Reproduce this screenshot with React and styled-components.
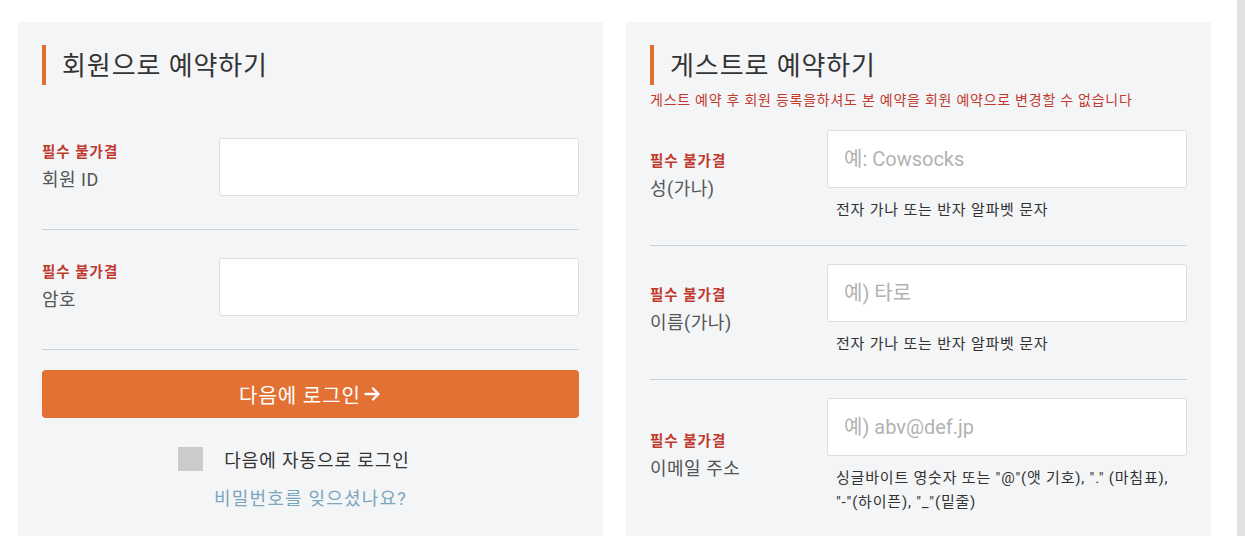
import React from "react";
import styled, { createGlobalStyle } from "styled-components";

const GlobalStyle = createGlobalStyle`
  html, body {
    margin: 0;
    padding: 0;
    background: #ffffff;
  }
  body {
    font-family: Roboto, "Noto Sans CJK KR", "Noto Sans", sans-serif;
    color: #333;
  }
  * {
    box-sizing: border-box;
  }
`;

const Page = styled.div`
  display: flex;
  height: 536px;
  overflow: hidden;
`;

const Main = styled.div`
  flex: 1;
  display: flex;
  align-items: flex-start;
  gap: 23px;
  padding: 22px 0 0 18px;
`;

const Rail = styled.div`
  width: 8px;
  background: #e2e2e2;
`;

const Panel = styled.section`
  width: 585px;
  min-height: 560px;
  background: #f3f5f7;
  padding: 23px 24px 40px;
`;

const Heading = styled.h2`
  margin: 0 0 ${({ $gap }) => $gap}px;
  height: 40px;
  display: flex;
  align-items: center;
  border-left: 4px solid #e06e30;
  padding-left: 16px;
  padding-bottom: 3px;
  font-size: 26px;
  font-weight: 400;
  letter-spacing: 0.9px;
  color: #333;
`;

const Notice = styled.p`
  margin: 4px 0 0;
  font-size: 14px;
  line-height: 22px;
  letter-spacing: 0.75px;
  color: #c2392e;
`;

const Row = styled.div`
  display: flex;
  align-items: center;
  padding: ${({ $top }) => $top}px 0 ${({ $bottom }) => $bottom}px;
  border-bottom: ${({ $last }) => ($last ? "none" : "1px solid #cfd2d5")};
`;

const LabelBox = styled.div`
  width: 177px;
  flex-shrink: 0;
  display: flex;
  flex-direction: column;
  padding-top: 3px;
`;

const Required = styled.span`
  font-size: 14.5px;
  line-height: 20px;
  font-weight: 700;
  letter-spacing: 1px;
  color: #c2392e;
`;

const Name = styled.span`
  margin-top: 3px;
  font-size: 18px;
  line-height: 28px;
  letter-spacing: 0.5px;
  color: #555;
`;

const Field = styled.div`
  flex: 1;
  display: flex;
  flex-direction: column;
`;

const Input = styled.input`
  width: 100%;
  height: 58px;
  border: 1px solid #dcdfe2;
  border-radius: 3px;
  background: #fff;
  padding: 0 16px;
  font-family: Roboto, "Noto Sans CJK KR", sans-serif;
  font-size: 20px;
  color: #333;
  outline: none;
  &::placeholder {
    color: #b2b2b2;
  }
`;

const Hint = styled.p`
  margin: 10px 0 0;
  padding-left: 9px;
  font-size: 15px;
  line-height: 24px;
  letter-spacing: 0.8px;
  white-space: pre-line;
  color: #333;
`;

const LoginButton = styled.button`
  width: 100%;
  height: 48px;
  margin-top: 20px;
  border: none;
  border-radius: 4px;
  background: #e37133;
  color: #fff;
  font-family: "Noto Sans CJK KR", sans-serif;
  font-size: 20px;
  letter-spacing: 1px;
  display: flex;
  align-items: center;
  justify-content: center;
  gap: 2px;
  cursor: pointer;
`;

const AutoLogin = styled.label`
  display: flex;
  align-items: center;
  justify-content: center;
  gap: 21px;
  margin-top: 28px;
  margin-right: 33px;
  font-size: 18px;
  letter-spacing: 0.9px;
  color: #333;
`;

const Box = styled.span`
  width: 25px;
  height: 24px;
  background: #cbcbcb;
`;

const Forgot = styled.a`
  display: block;
  margin-top: 12px;
  text-align: center;
  font-size: 18px;
  letter-spacing: 1.2px;
  color: #7ba6bd;
  text-decoration: none;
`;

const Arrow = () => (
  <svg width="19" height="18" viewBox="0 0 18 18" fill="none">
    <path
      d="M2 9h13M9.5 3.5 15 9l-5.5 5.5"
      stroke="#fff"
      strokeWidth="2.4"
      strokeLinecap="round"
      strokeLinejoin="round"
    />
  </svg>
);

const FormRow = ({ name, placeholder, hint, type, top, bottom, last }) => (
  <Row $top={top} $bottom={bottom} $last={last}>
    <LabelBox>
      <Required>필수 불가결</Required>
      <Name>{name}</Name>
    </LabelBox>
    <Field>
      <Input type={type || "text"} placeholder={placeholder} />
      {hint && <Hint>{hint}</Hint>}
    </Field>
  </Row>
);

export default function App() {
  return (
    <Page>
      <GlobalStyle />
      <Main>
        <Panel>
          <Heading $gap={24}>회원으로 예약하기</Heading>
          <FormRow name="회원 ID" top={29} bottom={33} />
          <FormRow name="암호" type="password" top={28} bottom={33} />
          <LoginButton>
            다음에 로그인
            <Arrow />
          </LoginButton>
          <AutoLogin>
            <Box />
            다음에 자동으로 로그인
          </AutoLogin>
          <Forgot href="#">비밀번호를 잊으셨나요?</Forgot>
        </Panel>
        <Panel>
          <Heading $gap={0}>게스트로 예약하기</Heading>
          <Notice>게스트 예약 후 회원 등록을하셔도 본 예약을 회원 예약으로 변경할 수 없습니다</Notice>
          <FormRow
            name="성(가나)"
            placeholder="예: Cowsocks"
            hint="전자 가나 또는 반자 알파벳 문자"
            top={19}
            bottom={23}
          />
          <FormRow
            name="이름(가나)"
            placeholder="예) 타로"
            hint="전자 가나 또는 반자 알파벳 문자"
            top={18}
            bottom={23}
          />
          <FormRow
            name="이메일 주소"
            placeholder="예) abv@def.jp"
            hint={'싱글바이트 영숫자 또는 "@"(앳 기호), "." (마침표),\n"-"(하이픈), "_"(밑줄)'}
            top={18}
            bottom={23}
            last
          />
        </Panel>
      </Main>
      <Rail />
    </Page>
  );
}
